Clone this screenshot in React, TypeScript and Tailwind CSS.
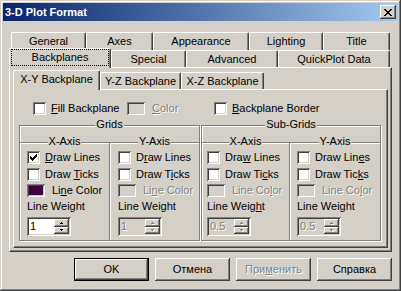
import type { ReactNode } from "react";

const raised = "shadow-[inset_-1px_-1px_0_#404040,inset_1px_1px_0_#ffffff,inset_-2px_-2px_0_#808080]";
const sunken = "shadow-[inset_1px_1px_0_#808080,inset_-1px_-1px_0_#ffffff,inset_2px_2px_0_#404040,inset_-2px_-2px_0_#d4d0c8]";
const etched = "border border-[#808080] shadow-[1px_1px_0_#ffffff,inset_1px_1px_0_#ffffff]";
const dim = "text-[#808080] [text-shadow:1px_1px_0_#ffffff]";

// text with one mnemonic letter underlined
const Mn = ({ text, at }: { text: string; at?: number }) =>
    at === undefined ? (
        <>{text}</>
    ) : (
        <>
            {text.slice(0, at)}
            <span className="underline underline-offset-[1px]">{text[at]}</span>
            {text.slice(at + 1)}
        </>
    );

const CheckBox = ({ checked }: { checked?: boolean }) => (
    <span className={`relative block h-[13px] w-[13px] shrink-0 bg-white ${sunken}`}>
        {checked && (
            <svg className="absolute top-0 left-0" width="13" height="13" shapeRendering="crispEdges">
                {[[3, 5], [4, 6], [5, 7], [6, 6], [7, 5], [8, 4], [9, 3]].map(([x, y]) => (
                    <rect key={x} x={x} y={y} width="1" height="3" fill="#000" />
                ))}
            </svg>
        )}
    </span>
);

const Check = ({ label, at, checked }: { label: string; at?: number; checked?: boolean }) => (
    <div className="flex h-[13px] items-center">
        <CheckBox checked={checked} />
        <span className="ml-[5px] whitespace-nowrap">
            <Mn text={label} at={at} />
        </span>
    </div>
);

const Swatch = ({ color }: { color?: string }) => (
    <span className={`block h-[13px] w-[18px] shrink-0 ${sunken} ${color ?? "bg-[#d4d0c8]"}`} />
);

const Arrow = ({ up, disabled }: { up?: boolean; disabled?: boolean }) => {
    const fill = disabled ? "#808080" : "#000";
    const rows = up ? [[1, 0, 1], [0, 1, 3]] : [[0, 0, 3], [1, 1, 1]];
    return (
        <svg width="4" height="3" shapeRendering="crispEdges">
            {disabled &&
                rows.map(([x, y, w]) => <rect key={"s" + y} x={x + 1} y={y + 1} width={w} height="1" fill="#fff" />)}
            {rows.map(([x, y, w]) => (
                <rect key={y} x={x} y={y} width={w} height="1" fill={fill} />
            ))}
        </svg>
    );
};

const Spin = ({ value, disabled }: { value: string; disabled?: boolean }) => (
    <div className={`flex h-[19px] w-[44px] p-[2px] ${disabled ? "bg-[#d4d0c8]" : "bg-white"} ${sunken}`}>
        <span className={`flex-1 pl-[1px] leading-[15px] ${disabled ? dim : ""}`}>{value}</span>
        <div className="flex w-[15px] flex-col">
            <div className={`flex h-[8px] items-center justify-center bg-[#d4d0c8] ${raised}`}>
                <Arrow up disabled={disabled} />
            </div>
            <div className={`flex h-[7px] items-center justify-center bg-[#d4d0c8] ${raised}`}>
                <Arrow disabled={disabled} />
            </div>
        </div>
    </div>
);

const Group = ({ title, className, children }: { title: string; className: string; children?: ReactNode }) => (
    <div className={`relative ${etched} ${className}`}>
        <div className="absolute inset-x-0 -top-[8px] flex justify-center">
            <span className="bg-[#d4d0c8] px-[1px]">{title}</span>
        </div>
        {children}
    </div>
);

interface IAxis {
    title: string;
    w: string;
    pad: string;
    lines: number;
    ticks: number;
    colorAt: number;
    weightAt?: number;
    color?: string;
    checked?: boolean;
    value: string;
}

const AxisBox = ({ a }: { a: IAxis }) => (
    <Group title={a.title} className={`h-[99px] pt-[8px] ${a.w} ${a.pad}`}>
        <Check label="Draw Lines" at={a.lines} checked={a.checked} />
        <div className="mt-[4px]">
            <Check label="Draw Ticks" at={a.ticks} />
        </div>
        <div className="mt-[3px] flex h-[13px] items-center">
            <Swatch color={a.color} />
            <span className={`ml-[7px] whitespace-nowrap ${a.color ? "" : dim}`}>
                <Mn text="Line Color" at={a.colorAt} />
            </span>
        </div>
        <div className="mt-[3px] h-[13px] whitespace-nowrap">
            <Mn text="Line Weight" at={a.weightAt} />
        </div>
        <div className="mt-[4px]">
            <Spin value={a.value} disabled={!a.color} />
        </div>
    </Group>
);

const Tab = ({ label, w, active, focus }: { label: string; w: string; active?: boolean; focus?: boolean }) => (
    <div
        className={`relative flex shrink-0 items-center justify-center whitespace-nowrap rounded-t-[2px] border-t border-r border-l border-white border-r-[#404040] bg-[#d4d0c8] shadow-[inset_-1px_0_0_#808080] ${w} ${
            active ? "z-10 -mt-[2px] h-[20px] pb-[2px]" : "h-full"
        }`}
    >
        {label}
        {focus && <span className="absolute top-0 right-[1px] bottom-[2px] left-[1px] border border-dotted border-black" />}
    </div>
);

const Button = ({ children, def, disabled }: { children: ReactNode; def?: boolean; disabled?: boolean }) => (
    <div
        className={`flex h-[23px] w-[75px] items-center justify-center ${raised} ${def ? "border border-black" : ""} ${
            disabled ? dim : ""
        }`}
    >
        {children}
    </div>
);

const axes: IAxis[] = [
    { title: "X-Axis", w: "w-[91px]", pad: "pl-[7px]", lines: 0, ticks: 5, colorAt: 2, color: "bg-[#400040]", checked: true, value: "1" },
    { title: "Y-Axis", w: "w-[91px] -ml-px", pad: "pl-[8px]", lines: 1, ticks: 6, colorAt: 2, value: "1" },
];
const subAxes: IAxis[] = [
    { title: "X-Axis", w: "w-[89px]", pad: "pl-[5px]", lines: 3, ticks: 7, colorAt: 7, weightAt: 9, value: "0.5" },
    { title: "Y-Axis", w: "w-[92px] -ml-px", pad: "pl-[7px]", lines: 8, ticks: 8, colorAt: 7, weightAt: 8, value: "0.5" },
];

export default function App() {
    return (
        <div
            className={`h-[291px] w-[401px] overflow-hidden bg-[#d4d0c8] p-[3px] font-['Liberation_Sans',Arial,sans-serif] text-[11px] leading-[13px] text-black shadow-[inset_-1px_-1px_0_#404040,inset_1px_1px_0_#d4d0c8,inset_-2px_-2px_0_#808080,inset_2px_2px_0_#ffffff]`}
        >
            {/* title bar */}
            <div className="flex h-[18px] items-center bg-linear-to-r from-[#0a246a] to-[#a6caf0] pr-[2px] pl-[2px]">
                <span className="pt-[1px] font-bold text-white">3-D Plot Format</span>
                <div className={`ml-auto flex h-[14px] w-[16px] items-center justify-center bg-[#d4d0c8] ${raised}`}>
                    <svg width="8" height="7" shapeRendering="crispEdges">
                        {[[0, 0], [6, 0], [1, 1], [5, 1], [2, 2], [4, 2], [3, 3], [2, 4], [4, 4], [1, 5], [5, 5], [0, 6], [6, 6]].map(
                            ([x, y]) => (
                                <rect key={`${x}-${y}`} x={x} y={y} width="2" height="1" fill="#000" />
                            ),
                        )}
                    </svg>
                </div>
            </div>

            {/* outer tab control */}
            <div className="mt-[11px] ml-[6px] w-[383px]">
                <div className="flex h-[18px] pl-[2px]">
                    <Tab label="General" w="w-[75px]" />
                    <Tab label="Axes" w="w-[67px]" />
                    <Tab label="Appearance" w="w-[96px]" />
                    <Tab label="Lighting" w="w-[74px]" />
                    <Tab label="Title" w="w-[67px]" />
                </div>
                <div className="flex h-[17px]">
                    <Tab label="Backplanes" w="w-[102px]" active focus />
                    <Tab label="Special" w="w-[75px]" />
                    <Tab label="Advanced" w="w-[92px]" />
                    <Tab label="QuickPlot Data" w="w-[112px]" />
                </div>
                <div className="h-[185px] border border-white border-r-[#404040] border-b-[#404040] px-[3px] pt-[4px] shadow-[inset_-1px_-1px_0_#808080]">
                    {/* inner tab control */}
                    <div className="flex h-[17px]">
                        <Tab label="X-Y Backplane" w="w-[87px]" active />
                        <Tab label="Y-Z Backplane" w="w-[81px]" />
                        <Tab label="X-Z Backplane" w="w-[83px]" />
                    </div>
                    <div className="h-[159px] border border-white border-r-[#404040] border-b-[#404040] shadow-[inset_-1px_-1px_0_#808080]">
                        <div className="mt-[12px] flex h-[13px] items-center pl-[19px]">
                            <div className="w-[94px]">
                                <Check label="Fill Backplane" at={0} />
                            </div>
                            <div className="flex w-[87px] items-center">
                                <Swatch />
                                <span className={`ml-[7px] ${dim}`}>
                                    <Mn text="Color" at={0} />
                                </span>
                            </div>
                            <Check label="Backplane Border" at={0} />
                        </div>

                        <div className="mt-[10px] flex pl-[5px]">
                            <Group title="Grids" className="h-[116px] w-[181px]">
                                <div className="-mx-px mt-[16px] flex">
                                    {axes.map((a) => (
                                        <AxisBox key={a.title} a={a} />
                                    ))}
                                </div>
                            </Group>
                            <Group title="Sub-Grids" className="ml-[1px] h-[116px] w-[180px]">
                                <div className="-mx-px mt-[16px] flex">
                                    {subAxes.map((a) => (
                                        <AxisBox key={a.title} a={a} />
                                    ))}
                                </div>
                            </Group>
                        </div>
                    </div>
                </div>
            </div>

            {/* dialog buttons */}
            <div className="mt-[6px] flex justify-end gap-[6px] pr-[6px]">
                <Button def>OK</Button>
                <Button>Отмена</Button>
                <Button disabled>
                    <Mn text="Применить" at={3} />
                </Button>
                <Button>Справка</Button>
            </div>
        </div>
    );
}
